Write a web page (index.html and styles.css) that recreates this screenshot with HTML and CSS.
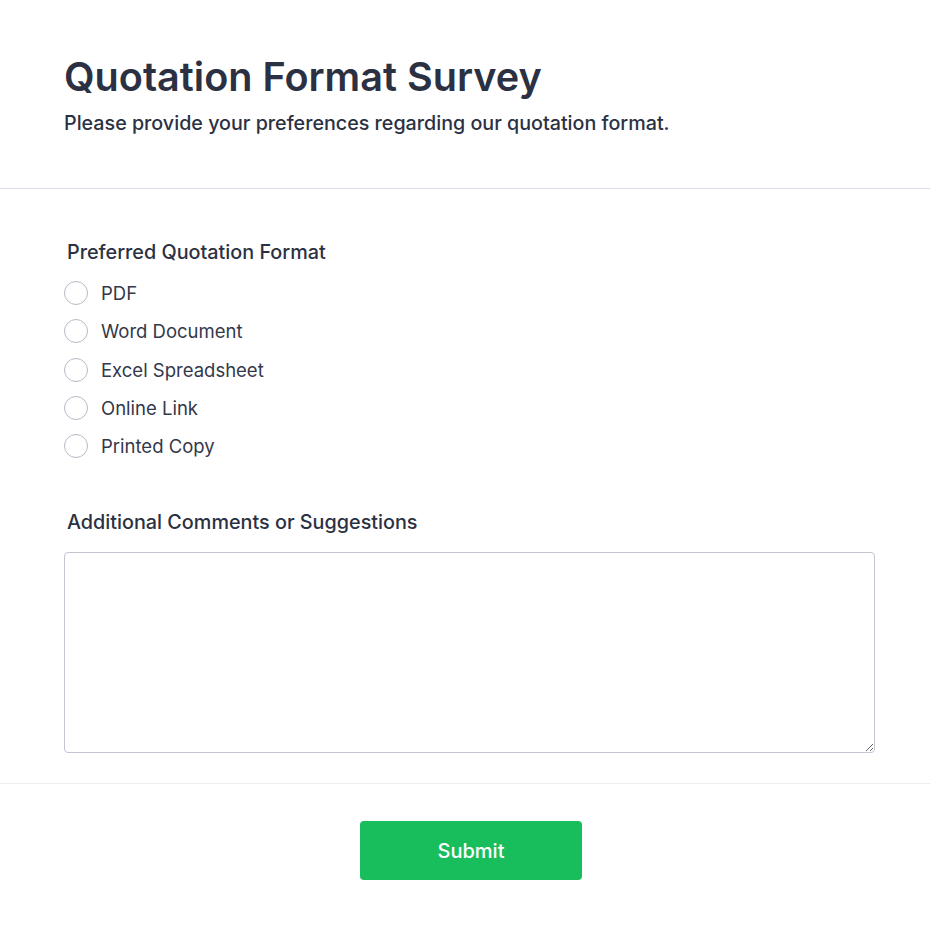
FILE: index.html
```html
<!DOCTYPE html>
<html>
<head>
<meta charset="utf-8">
<link rel="stylesheet" href="styles.css">
</head>
<body>
<div class="page">
  <header class="header">
    <h1 class="title">Quotation Format Survey</h1>
    <p class="subtitle">Please provide your preferences regarding our quotation format.</p>
  </header>
  <form class="form">
    <div class="field">
      <div class="label">Preferred Quotation Format</div>
      <div class="options">
        <label class="option"><span class="radio"></span><span>PDF</span></label>
        <label class="option"><span class="radio"></span><span>Word Document</span></label>
        <label class="option"><span class="radio"></span><span>Excel Spreadsheet</span></label>
        <label class="option"><span class="radio"></span><span>Online Link</span></label>
        <label class="option"><span class="radio"></span><span>Printed Copy</span></label>
      </div>
    </div>
    <div class="field field-comments">
      <div class="label">Additional Comments or Suggestions</div>
      <textarea class="textarea"></textarea>
    </div>
  </form>
  <div class="footer">
    <button class="submit" type="button">Submit</button>
  </div>
</div>
</body>
</html>
```
FILE: styles.css
```css
* { box-sizing: border-box; }
html, body { margin: 0; padding: 0; background: #ffffff; }
body { font-family: Inter, "Noto Sans", sans-serif; color: #2b3040; }
.page { width: 930px; }
.header {
  padding: 53px 55px 0 64px;
  height: 189px;
  border-bottom: 1px solid #dcdde6;
}
.title {
  margin: 0;
  font-size: 39.6px;
  font-weight: 600;
  line-height: 48px;
  color: #2b3142;
}
.subtitle {
  margin: 8px 0 0 0;
  font-size: 19.7px;
  font-weight: 500;
  line-height: 28px;
  color: #2b3142;
}
.form {
  padding: 49px 55px 30px 64px;
  border-bottom: 1px solid #ececf1;
}
.label {
  font-size: 19.8px;
  font-weight: 500;
  line-height: 28px;
  padding-left: 3px;
  color: #2b3142;
}
.options {
  margin-top: 15px;
  display: flex;
  flex-direction: column;
  gap: 14px;
}
.option {
  display: flex;
  align-items: center;
  gap: 13px;
  font-size: 18.5px;
  line-height: 24.3px;
  color: #33384a;
}
.radio {
  width: 24px;
  height: 24px;
  border-radius: 50%;
  border: 1px solid #b7bac7;
  background: #fff;
  flex: none;
}
.field-comments { margin-top: 50px; }
.textarea {
  display: block;
  margin-top: 16px;
  width: 811px;
  height: 201px;
  border: 1px solid #c3c5d1;
  border-radius: 4px;
  resize: vertical;
  font-family: inherit;
}
.footer {
  display: flex;
  justify-content: center;
  padding: 37px 0;
}
.submit {
  width: 222px;
  height: 59px;
  background: #19be5c;
  border: none;
  border-radius: 4px;
  color: #ffffff;
  font-family: Inter, "Noto Sans", sans-serif;
  font-size: 20px;
  font-weight: 500;
  margin-left: 12px;
}
```
